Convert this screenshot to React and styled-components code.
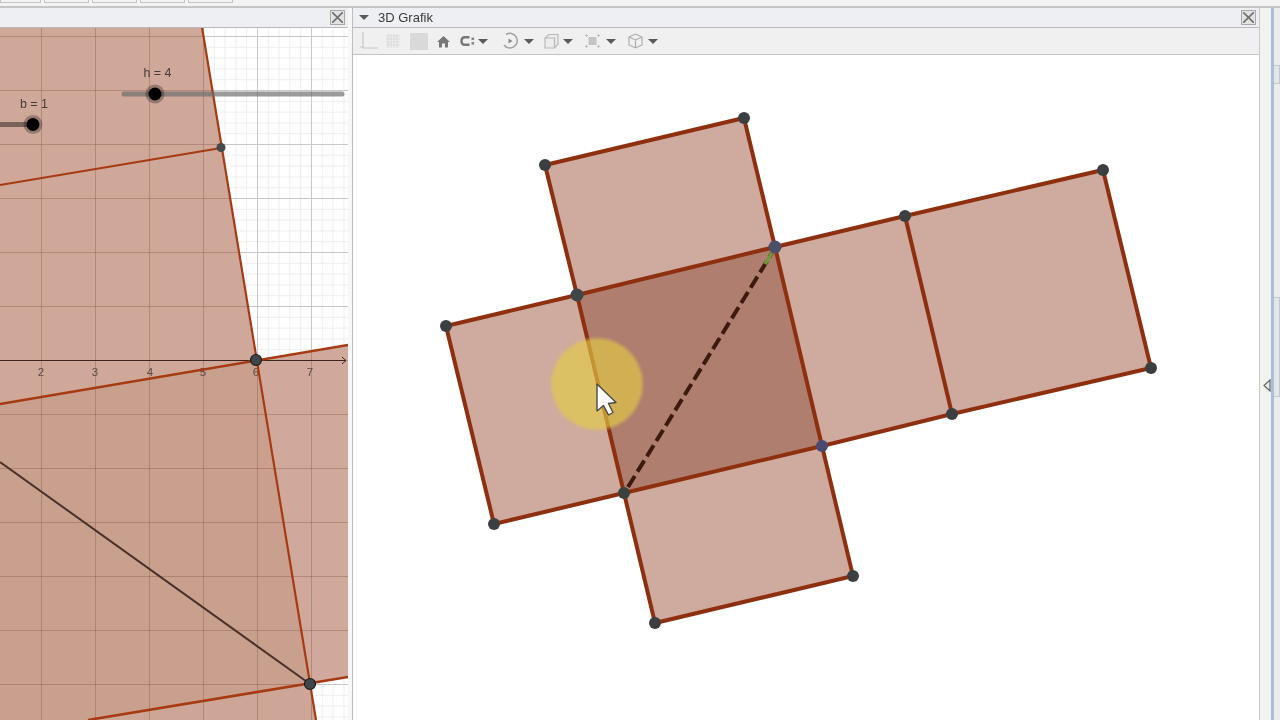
import React from "react";
import styled, { createGlobalStyle } from "styled-components";

const Global = createGlobalStyle`
  html, body { margin: 0; padding: 0; width: 1280px; height: 720px; overflow: hidden; background: #f1f1f1; }
  #root { width: 1280px; height: 720px; }
`;

const Page = styled.div`
  width: 1280px; height: 720px; display: flex; flex-direction: column; overflow: hidden;
  background: #f1f1f1; font-family: "Liberation Sans", Arial, sans-serif; filter: blur(0.5px);
`;
const TopStrip = styled.div`
  height: 6px; display: flex; gap: 3px; align-items: flex-start; background: #f3f3f3; border-bottom: 2px solid #c4c4c4; flex: none;
`;
const TopTab = styled.div`
  width: ${p => p.$w}px; height: 2px; background: #f3f3f3; border: 1px solid #c4c4c4; border-top: 0;
`;
const Workspace = styled.div`flex: 1; display: flex; min-height: 0;`;
const LeftPanel = styled.section`
  width: 348px; flex: none; display: flex; flex-direction: column;
`;
const Splitter = styled.div`
  width: 4px; flex: none; background: #f7f7f7; border-right: 1px solid #bdbdbd;
`;
const RightPanel = styled.section`
  width: 906px; flex: none; display: flex; flex-direction: column; background: #fff;
`;
const PanelHeader = styled.header`
  height: 19px; flex: none; display: flex; align-items: center; justify-content: space-between;
  padding: 0 3px 0 6px; background: #eeeff2; border-bottom: 1px solid #b9b9b9;
`;
const HeaderTitle = styled.div`display: flex; align-items: center; gap: 9px; font-size: 13px; color: #3a3a3a;`;
const Caret = styled.span`
  display: inline-block; flex: none; width: 0; height: 0; border-left: ${p => p.$s}px solid transparent;
  border-right: ${p => p.$s}px solid transparent; border-top: ${p => p.$s}px solid #5a5a5a;
`;
const CloseButton = styled.div`
  width: 13px; height: 13px; border: 1px solid #a8a8a8; background: #e2e2e2; display: flex; align-items: center; justify-content: center;
  margin-left: auto;
`;
const Toolbar = styled.div`
  height: 26px; flex: none; display: flex; align-items: center; padding-left: 7px;
  background: #f0f0f0; border-bottom: 1px solid #c4c4c4;
`;
const Tool = styled.div`
  display: flex; align-items: center; gap: ${p => p.$gap ?? 5}px; margin-right: ${p => p.$mr}px;
`;
const CanvasArea = styled.div`flex: 1; min-height: 0; position: relative; background: #fff; overflow: hidden;`;
const Drawing = styled.svg`display: block; width: 100%; height: 100%;`;
const RightStrip = styled.aside`
  flex: 1; display: flex; background: #f2f2ef; border-left: 1px solid #c9c9c9;
`;
const StripInner = styled.div`width: 11px; flex: none; padding: 370px 0 0 3px; box-sizing: border-box;`;
const BlueLine = styled.div`width: 3px; flex: none; background: #a6c0dc;`;
const StripEnd = styled.div`flex: 1; background: #ececec; display: flex; flex-direction: column;`;
const ScrollTab = styled.div`
  height: ${p => p.$h}px; margin-top: ${p => p.$top}px; flex: none; background: #e4e7ea; border: 1px solid #c8c8c8; border-left: 0; box-sizing: border-box;
`;

const X = () => (
  <svg width="11" height="11" viewBox="0 0 11 11"><path d="M0 0 L11 11 M11 0 L0 11" stroke="#707070" strokeWidth="1.6" /></svg>
);

const majorXs = [-12.5, 41.5, 95.5, 149.5, 203.5, 257.5, 311.5];
const majorYs = Array.from({ length: 13 }, (_, i) => 36.5 + 54 * i);
const minorXs = Array.from({ length: 34 }, (_, i) => -12.5 + 10.8 * i);
const minorYs = Array.from({ length: 65 }, (_, i) => 36.5 + 10.8 * i);

const fillShapes = {
  top: "M0 27 H202 L256 360 L0 404 Z",
  mid: "M0 404 L256 360 L310 684 L88 720 H0 Z",
  right: "M256 360 L348 345 V677 L310 684 Z",
  bottom: "M88 720 L310 684 L316 720 Z",
};

const LeftGraph = () => {
  const red = "#a63a12";
  return (
    <Drawing viewBox="0 28 348 692" preserveAspectRatio="none">
      <defs>
        <clipPath id="filled">
          {Object.values(fillShapes).map(d => <path key={d} d={d} />)}
        </clipPath>
      </defs>
      {minorXs.map(x => <line key={x} x1={x} x2={x} y1="27" y2="720" stroke="#eeeeee" />)}
      {minorYs.map(y => <line key={y} y1={y} y2={y} x1="0" x2="348" stroke="#eeeeee" />)}
      {majorXs.map(x => <line key={x} x1={x} x2={x} y1="27" y2="720" stroke="#c8c8c8" />)}
      {majorYs.map(y => <line key={y} y1={y} y2={y} x1="0" x2="348" stroke="#c8c8c8" />)}
      <path d={fillShapes.top} fill="#cfa899" />
      <path d={fillShapes.mid} fill="#c99f8e" />
      <path d={fillShapes.right} fill="#d1a99c" />
      <path d={fillShapes.bottom} fill="#cea698" />
      <g clipPath="url(#filled)" stroke="#8a5c4c" strokeOpacity="0.42">
        {majorXs.map(x => <line key={x} x1={x} x2={x} y1="27" y2="720" />)}
        {majorYs.map(y => <line key={y} y1={y} y2={y} x1="0" x2="348" />)}
      </g>
      <line x1="0" y1="360.5" x2="346" y2="360.5" stroke="#3c2420" strokeWidth="1" />
      <path d="M342 357 L346 360.5 L342 364" fill="none" stroke="#3c2420" strokeWidth="1" />
      <g fontSize="11.5" fontFamily="Liberation Sans, Arial, sans-serif" fill="#5a4a44" textAnchor="middle">
        <text x="41" y="376">2</text><text x="95" y="376">3</text><text x="150" y="376">4</text>
        <text x="203" y="376">5</text><text x="256" y="376">6</text><text x="310" y="376">7</text>
      </g>
      <line x1="0" y1="462" x2="310" y2="684" stroke="#4a3028" strokeWidth="2" />
      <g stroke={red} strokeWidth="2.2" fill="none">
        <path d="M202 27 L316 720" />
        <path d="M0 185 L221 148" />
        <path d="M0 404 L348 345" strokeWidth="2.6" />
        <path d="M88 720 L348 677" strokeWidth="2.6" />
      </g>
      <line x1="124" y1="94" x2="342" y2="94" stroke="#6b6b6b" strokeOpacity="0.68" strokeWidth="5" strokeLinecap="round" />
      <line x1="0" y1="124.5" x2="30" y2="124.5" stroke="#5e4a44" strokeOpacity="0.75" strokeWidth="5" />
      <circle cx="155" cy="94" r="9.5" fill="#000" fillOpacity="0.28" />
      <circle cx="155" cy="94" r="6.5" fill="#000" />
      <circle cx="33" cy="124.5" r="9.5" fill="#000" fillOpacity="0.28" />
      <circle cx="33" cy="124.5" r="6.5" fill="#000" />
      <g fontSize="12.5" fontFamily="Liberation Sans, Arial, sans-serif" fill="#443c38" textAnchor="middle">
        <text x="157.5" y="77">h = 4</text>
        <text x="34" y="108">b = 1</text>
      </g>
      <circle cx="221" cy="147.5" r="4.5" fill="#454a4a" />
      <circle cx="256" cy="360" r="5.5" fill="#40464c" stroke="#1c1c1c" strokeWidth="1.2" />
      <circle cx="310" cy="684" r="5.5" fill="#40464c" stroke="#1c1c1c" strokeWidth="1.2" />
    </Drawing>
  );
};

const netPoints = [[545,165],[744,118],[1103,170],[905,216],[1151,368],[952,414],[853,576],[655,623],[494,524],[446,326]];

const RightGraph = () => {
  const red = "#8e3010";
  const outline = "M545 165 L744 118 L775 247 L905 216 L1103 170 L1151 368 L952 414 L822 446 L853 576 L655 623 L624 493 L494 524 L446 326 L577 295 Z";
  return (
    <Drawing viewBox="353 55 906 665" preserveAspectRatio="none">
      <defs>
        <radialGradient id="spot">
          <stop offset="0.9" stopColor="#e4cc44" stopOpacity="0.64" />
          <stop offset="1" stopColor="#e4cc44" stopOpacity="0" />
        </radialGradient>
      </defs>
      <path d={outline} fill="#cfaa9e" />
      <path d="M577 295 L775 247 L822 446 L624 493 Z" fill="#b07e6e" />
      <g stroke={red} strokeWidth="4" fill="none" strokeLinecap="round">
        <path d={outline} />
        <path d="M577 295 L775 247" />
        <path d="M577 295 L624 493" />
        <path d="M775 247 L822 446" />
        <path d="M905 216 L952 414" />
        <path d="M624 493 L822 446" />
      </g>
      <line x1="628" y1="487" x2="772" y2="253" stroke="#3d1a10" strokeWidth="4" strokeDasharray="13 5" />
      <line x1="772" y1="253" x2="765" y2="264" stroke="#6f9a3a" strokeWidth="3.5" />
      <circle cx="597" cy="384" r="48" fill="url(#spot)" />
      {netPoints.map(([x, y]) => <circle key={`${x}-${y}`} cx={x} cy={y} r="6" fill="#3c3f42" />)}
      <circle cx="577" cy="295" r="6.5" fill="#3f4648" />
      <circle cx="775" cy="247" r="6.5" fill="#4b4f66" />
      <circle cx="822" cy="446" r="6" fill="#4a4a70" />
      <circle cx="624" cy="493" r="6" fill="#3a4240" />
      <path d="M597 384 L597 411 L603.5 405.5 L608.5 415 L613 412.5 L608.5 403.5 L616 402.5 Z" fill="#fdfdfd" stroke="#4a4a4a" strokeWidth="1.4" strokeLinejoin="round" />
    </Drawing>
  );
};

const ToolCaret = () => <Caret $s={5} />;

export default function App() {
  return (
    <Page>
      <Global />
      <TopStrip>
        <TopTab $w={39} /><TopTab $w={43} /><TopTab $w={43} /><TopTab $w={43} /><TopTab $w={43} />
      </TopStrip>
      <Workspace>
        <LeftPanel>
          <PanelHeader>
            <CloseButton><X /></CloseButton>
          </PanelHeader>
          <CanvasArea><LeftGraph /></CanvasArea>
        </LeftPanel>
        <Splitter />
        <RightPanel>
          <PanelHeader>
            <HeaderTitle><Caret $s={5} />3D Grafik</HeaderTitle>
            <CloseButton><X /></CloseButton>
          </PanelHeader>
          <Toolbar>
            <Tool $mr={7}>
              <svg width="18" height="18" viewBox="0 0 18 18"><path d="M3 0 V16 H18 M0 15 H3" fill="none" stroke="#c6c6c6" strokeWidth="1.2" /></svg>
            </Tool>
            <Tool $mr={9}>
              <svg width="16" height="16" viewBox="0 0 16 16"><path d="M1 3H15M1 6H15M1 9H15M1 12H15M3 1V15M6 1V15M9 1V15M12 1V15" stroke="#d8d8d8" strokeWidth="1" fill="none" /></svg>
            </Tool>
            <Tool $mr={9}>
              <svg width="18" height="17" viewBox="0 0 18 17"><rect width="18" height="17" fill="#d9d9d9" /></svg>
            </Tool>
            <Tool $mr={10}>
              <svg width="13" height="13" viewBox="0 0 13 13"><path d="M6.5 1 L13 7 H11 V12.5 H8 V8.5 H5 V12.5 H2 V7 H0 Z" fill="#777" /></svg>
            </Tool>
            <Tool $mr={13} $gap={3}>
              <svg width="15" height="12" viewBox="0 0 15 12"><path d="M9.5 2.2 H5 Q1.5 2.2 1.5 6 Q1.5 9.8 5 9.8 H9.5" fill="none" stroke="#777" strokeWidth="2.4" /><rect x="11.5" y="2.5" width="2.6" height="2.6" fill="#888" /><rect x="11.5" y="7" width="2.6" height="2.6" fill="#888" /></svg>
              <ToolCaret />
            </Tool>
            <Tool $mr={10} $gap={6}>
              <svg width="17" height="18" viewBox="0 0 17 18"><path d="M5 2.5 A7.3 7.3 0 1 1 3 13" fill="none" stroke="#a0a0a0" strokeWidth="1.5" /><path d="M7.5 6.5 L11.5 9 L7.5 11.5 Z" fill="#8a8a8a" /></svg>
              <ToolCaret />
            </Tool>
            <Tool $mr={12} $gap={4}>
              <svg width="15" height="16" viewBox="0 0 15 16"><path d="M1 5 L5 1.5 H14 V11 L10.5 15 H1 Z M1 5 H10.5 V15" fill="#ececec" stroke="#b8b8b8" strokeWidth="1.2" /></svg>
              <ToolCaret />
            </Tool>
            <Tool $mr={12} $gap={6}>
              <svg width="15" height="16" viewBox="0 0 15 16"><rect x="3.5" y="4" width="8" height="8" fill="#c4c4c4" /><path d="M0 2.5H3M1.5 1V4M12 2.5H15M13.5 1V4M0 13.5H3M1.5 12V15M12 13.5H15M13.5 12V15" stroke="#c0c0c0" strokeWidth="1" /></svg>
              <ToolCaret />
            </Tool>
            <Tool $gap={5}>
              <svg width="15" height="16" viewBox="0 0 15 16"><path d="M7.5 1 L14 4 V12 L7.5 15 L1 12 V4 Z M1 4 L7.5 7 L14 4 M7.5 7 V15" fill="none" stroke="#aaaaaa" strokeWidth="1.1" /></svg>
              <ToolCaret />
            </Tool>
          </Toolbar>
          <CanvasArea><RightGraph /></CanvasArea>
        </RightPanel>
        <RightStrip>
          <StripInner>
            <svg width="8" height="13" viewBox="0 0 8 13"><path d="M7 1 L1 6.5 L7 12 Z" fill="#ececec" stroke="#666" strokeWidth="1.2" /></svg>
          </StripInner>
          <BlueLine />
          <StripEnd>
            <ScrollTab $top={57} $h={19} />
            <ScrollTab $top={213} $h={100} />
          </StripEnd>
        </RightStrip>
      </Workspace>
    </Page>
  );
}
